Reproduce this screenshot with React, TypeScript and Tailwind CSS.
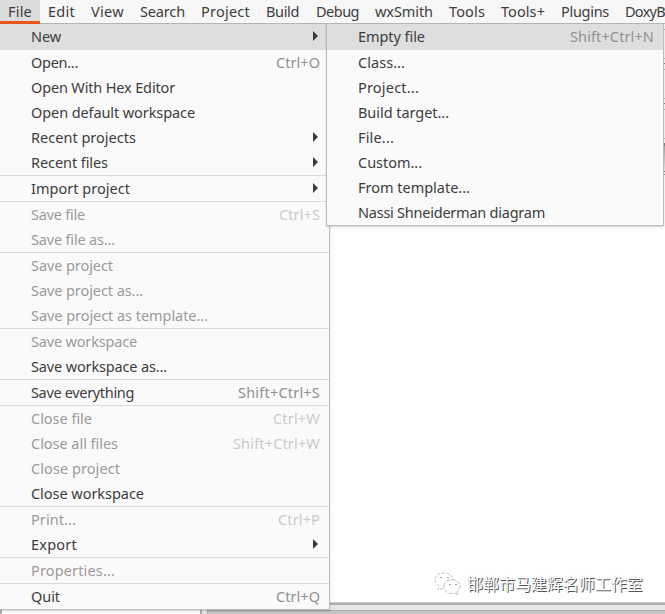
import { useLayoutEffect, useRef } from "react";
import clsx from "clsx";

type Item = {
  label: string;
  width: number;
  shortcut?: string;
  shortcutWidth?: number;
  disabled?: boolean;
  active?: boolean;
  submenu?: boolean;
};

const MENUS = [
  { label: "File", width: 24, box: "w-10 bg-[#dcdcdc] border-b-[#e95420]" },
  { label: "Edit", width: 27, box: "w-[43px]" },
  { label: "View", width: 33, box: "w-[49px]" },
  { label: "Search", width: 45, box: "w-[61px]" },
  { label: "Project", width: 49, box: "w-[65px]" },
  { label: "Build", width: 33, box: "w-[50px]" },
  { label: "Debug", width: 43, box: "w-[59px]" },
  { label: "wxSmith", width: 58, box: "w-[74px]" },
  { label: "Tools", width: 36, box: "w-[52px]" },
  { label: "Tools+", width: 44, box: "w-[60px]" },
  { label: "Plugins", width: 48, box: "w-16" },
  { label: "DoxyB", width: 40, box: "w-12" },
];

// each inner array is a group, groups are split by a separator
const FILE_GROUPS: Item[][] = [
  [{ label: "New", width: 30, submenu: true, active: true }],
  [
    { label: "Open...", width: 47, shortcut: "Ctrl+O", shortcutWidth: 44 },
    { label: "Open With Hex Editor", width: 144 },
    { label: "Open default workspace", width: 164 },
    { label: "Recent projects", width: 105, submenu: true },
    { label: "Recent files", width: 77, submenu: true },
  ],
  [{ label: "Import project", width: 99, submenu: true }],
  [
    { label: "Save file", width: 54, shortcut: "Ctrl+S", shortcutWidth: 41, disabled: true },
    { label: "Save file as...", width: 84, disabled: true },
  ],
  [
    { label: "Save project", width: 82, disabled: true },
    { label: "Save project as...", width: 112, disabled: true },
    { label: "Save project as template...", width: 177, disabled: true },
  ],
  [
    { label: "Save workspace", width: 106, disabled: true },
    { label: "Save workspace as...", width: 136 },
  ],
  [{ label: "Save everything", width: 103, shortcut: "Shift+Ctrl+S", shortcutWidth: 82 }],
  [
    { label: "Close file", width: 61, shortcut: "Ctrl+W", shortcutWidth: 47, disabled: true },
    { label: "Close all files", width: 87, shortcut: "Shift+Ctrl+W", shortcutWidth: 87, disabled: true },
    { label: "Close project", width: 89, disabled: true },
    { label: "Close workspace", width: 113 },
  ],
  [
    { label: "Print...", width: 45, shortcut: "Ctrl+P", shortcutWidth: 42, disabled: true },
    { label: "Export", width: 46, submenu: true },
  ],
  [{ label: "Properties...", width: 84, disabled: true }],
  [{ label: "Quit", width: 29, shortcut: "Ctrl+Q", shortcutWidth: 44 }],
];

const NEW_GROUPS: Item[][] = [
  [{ label: "Empty file", width: 67, shortcut: "Shift+Ctrl+N", shortcutWidth: 84, active: true }],
  [
    { label: "Class...", width: 47 },
    { label: "Project...", width: 61 },
    { label: "Build target...", width: 91 },
    { label: "File...", width: 36 },
    { label: "Custom...", width: 64 },
    { label: "From template...", width: 112 },
    { label: "Nassi Shneiderman diagram", width: 187 },
  ],
];

// Spreads or tightens the letters so that the text takes the given width.
function FitText({ text, width, className }: { text: string; width: number; className?: string }) {
  const ref = useRef<HTMLSpanElement>(null);
  useLayoutEffect(() => {
    const el = ref.current;
    if (!el) return;
    el.style.letterSpacing = "0px";
    const natural = el.getBoundingClientRect().width;
    el.style.letterSpacing = `${(width - natural) / text.length}px`;
  }, [text, width]);
  return (
    <span ref={ref} className={clsx("shrink-0 whitespace-pre", className)}>
      {text}
    </span>
  );
}

function MenuRow({ item }: { item: Item }) {
  return (
    <div
      className={clsx(
        "flex h-[25px] items-center justify-between pr-[9px] pb-[2px] pl-[31px]",
        item.active && "bg-[#dedede]",
        item.disabled ? "text-[#9b9b9b]" : "text-[#3d3d3d]",
      )}
    >
      <FitText text={item.label} width={item.width} />
      {item.shortcut && (
        <FitText
          text={item.shortcut}
          width={item.shortcutWidth ?? 0}
          className={item.disabled ? "text-[#cbcbcb]" : "text-[#919191]"}
        />
      )}
      {item.submenu && (
        <svg width="5" height="10" viewBox="0 0 5 10" className="mr-[2px]">
          <path d="M0 0L5 5L0 10Z" fill="#3a3a3a" />
        </svg>
      )}
    </div>
  );
}

function MenuPanel({ groups, className }: { groups: Item[][]; className: string }) {
  return (
    <div className={clsx("absolute border-[#bcbcbc] bg-[#fafafa] shadow-[0_1px_2px_rgba(0,0,0,0.18)]", className)}>
      {groups.map((group, i) => (
        <div
          key={i}
          className={clsx(i < groups.length - 1 && "border-b", group[0].active ? "border-[#dedede]" : "border-[#dcdcdc]")}
        >
          {group.map((item) => (
            <MenuRow key={item.label} item={item} />
          ))}
        </div>
      ))}
    </div>
  );
}

function Watermark() {
  return (
    <div className="absolute top-[569px] left-[433px] flex items-center gap-[5px]">
      <svg width="29" height="28" viewBox="0 0 29 28" fill="none" stroke="#a0a0a0" strokeWidth="0.7">
        <path d="M10 19.5L5 21L6 17C-1 12 2 4 11 4C17 4 20 8 20 11" strokeDasharray="3 1.5" />
        <path d="M11 17C11 8 28 9 27 18C27 20 25 22 24 23L25 26L21 24C15 26 11 22 11 17Z" strokeDasharray="4 1.5" />
        <path d="M7 8.5h2M14 8.5h2M16 15.5h2M22 15.5h2" strokeWidth="1.2" />
      </svg>
      <span className="font-['Noto_Sans_CJK_SC',sans-serif] text-[16px] leading-6 tracking-[-0.04px] whitespace-nowrap text-white [text-shadow:1px_1px_0_#555,0_0_1px_#bbb]">
        邯郸市马建辉名师工作室
      </span>
    </div>
  );
}

export default function App() {
  return (
    <div className="relative flex h-[614px] w-[665px] flex-col overflow-hidden bg-white font-['Noto_Sans','Open_Sans',sans-serif] text-[14.5px] leading-5">
      <nav className="flex h-6 shrink-0 border-b border-[#b8b8b8] bg-[#f7f7f7] text-[#3d3d3d]">
        {MENUS.map((m) => (
          <div key={m.label} className={clsx("-mb-px h-6 shrink-0 border-b-[3px] border-transparent pt-px pl-2", m.box)}>
            <FitText text={m.label} width={m.width} />
          </div>
        ))}
      </nav>

      {/* editor area, with the edges of the toolbars on its right */}
      <main className="flex flex-1 justify-end">
        <div className="flex w-[2px] flex-col bg-[#fafafa]">
          <div className="mt-[5px] h-px bg-[#bbb]" />
          <div className="mt-7 h-px bg-[#bbb]" />
          <div className="mt-1 h-px bg-[#888]" />
          <div className="mt-[5px] h-px bg-[#bbb]" />
          <div className="mt-7 h-px bg-[#bbb]" />
          <div className="mt-1 h-px bg-[#888]" />
          <div className="mt-[5px] h-px bg-[#bbb]" />
          <div className="mt-7 h-px bg-[#bbb]" />
          <div className="mt-1 h-[3px] bg-[#888]" />
          <div className="h-[25px] bg-linear-to-b from-[#aaa] to-[#eee]" />
          <div className="h-px bg-[#888]" />
          <div className="mt-[2px] h-px bg-[#999]" />
          <div className="flex-1 bg-white" />
        </div>
      </main>

      <footer className="flex h-3 shrink-0">
        <div className="w-[202px] border-x-2 border-[#acacac] bg-white" />
        <div className="flex flex-1 flex-col bg-[#e6e6e6]">
          <div className="h-px bg-[#cfcfcf]" />
          <div className="h-[2px] bg-[#adadad]" />
          <div className="mt-[5px] ml-[5px] flex-1 border-t border-l border-[#aaa] bg-[#c4c4c4]" />
        </div>
      </footer>

      <MenuPanel groups={FILE_GROUPS} className="top-6 left-0 w-[330px] border-r border-b" />
      <MenuPanel groups={NEW_GROUPS} className="top-6 left-[326px] w-[338px] border-x border-b" />
      <Watermark />
    </div>
  );
}
